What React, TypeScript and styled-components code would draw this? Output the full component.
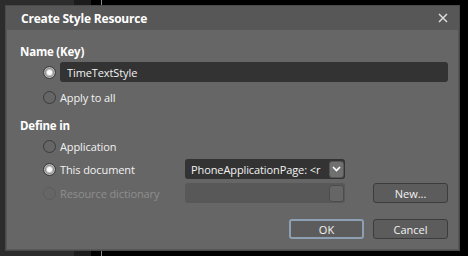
import React, { useState } from "react";
import styled, { createGlobalStyle } from "styled-components";

const GlobalStyle = createGlobalStyle`
  html, body {
    margin: 0;
    padding: 0;
  }
  body {
    width: 468px;
    height: 256px;
    overflow: hidden;
    background: linear-gradient(
      to right,
      #2c2c2c 0 74px,
      #1c1c1c 74px 91px,
      #000 91px 101px,
      #8a8a8a 101px 102px,
      #000 102px
    );
    font-family: "Open Sans", "Noto Sans", "Liberation Sans", sans-serif;
  }
`;

const Screen = styled.div`
  padding: 5px 0 0 5px;
`;

const Dialog = styled.div`
  width: 455px;
  height: 246px;
  box-sizing: border-box;
  background: #575757;
  border: 1px solid #4a4a4a;
  padding: 0 1px 1px 1px;
  display: flex;
  flex-direction: column;
`;

const TitleBar = styled.div`
  height: 24px;
  display: flex;
  align-items: center;
  justify-content: space-between;
  padding: 0 8px 0 14px;
`;

const Title = styled.div`
  color: #ffffff;
  font-size: 12px;
  font-weight: 700;
  letter-spacing: -0.2px;
`;

const CloseButton = styled.button`
  width: 14px;
  height: 14px;
  padding: 0;
  border: none;
  background: transparent;
  display: flex;
  align-items: center;
  justify-content: center;
`;

const Panel = styled.div`
  flex: 1;
  background: #666666;
  padding: 14px 10px 0 13px;
  display: flex;
  flex-direction: column;
`;

const GroupLabel = styled.div<{ $top?: number }>`
  color: #ffffff;
  font-size: 11.5px;
  font-weight: 700;
  letter-spacing: -0.2px;
  line-height: 16px;
  margin-top: ${(p) => p.$top ?? 0}px;
`;

const Row = styled.div<{ $top?: number }>`
  display: flex;
  align-items: center;
  height: 20px;
  margin-top: ${(p) => p.$top ?? 0}px;
  padding-left: 23px;
`;

const RadioCircle = styled.span<{ $checked?: boolean; $disabled?: boolean }>`
  width: 11px;
  height: 11px;
  border-radius: 50%;
  flex: none;
  margin-right: 4px;
  display: flex;
  align-items: center;
  justify-content: center;
  border: 1px solid ${(p) => (p.$disabled ? "#5c5c5c" : "#3a3a3a")};
  background: ${(p) => (p.$checked ? "#8a8a8a" : "transparent")};
  box-shadow: ${(p) => (p.$checked ? "inset 0 0 0 1px #b8b8b8" : "none")};

  &::after {
    content: "";
    display: ${(p) => (p.$checked ? "block" : "none")};
    width: 5px;
    height: 5px;
    border-radius: 50%;
    background: #ffffff;
    box-shadow: 0 0 1px 1px rgba(255, 255, 255, 0.6);
  }
`;

const RadioLabel = styled.label<{ $disabled?: boolean; $width?: number }>`
  display: flex;
  align-items: center;
  font-size: 11px;
  letter-spacing: -0.1px;
  color: ${(p) => (p.$disabled ? "#8e8e8e" : "#f2f2f2")};
  width: ${(p) => (p.$width ? `${p.$width}px` : "auto")};
  flex: none;
  cursor: default;
`;

const TextBox = styled.input`
  flex: 1;
  height: 20px;
  box-sizing: border-box;
  border: none;
  border-radius: 3px;
  background: #333333;
  color: #f2f2f2;
  font-family: inherit;
  font-size: 11px;
  letter-spacing: -0.1px;
  padding: 0 7px;
  outline: none;
`;

const Combo = styled.div<{ $disabled?: boolean }>`
  width: 160px;
  height: 20px;
  box-sizing: border-box;
  border-radius: 3px;
  background: ${(p) => (p.$disabled ? "#585858" : "#333333")};
  display: flex;
  align-items: center;
  padding: 0 1px 0 6px;
  overflow: hidden;
`;

const ComboText = styled.span`
  flex: 1;
  font-size: 11px;
  letter-spacing: -0.1px;
  color: #f2f2f2;
  white-space: nowrap;
  overflow: hidden;
`;

const ComboArrow = styled.span<{ $disabled?: boolean }>`
  width: 15px;
  height: 17px;
  flex: none;
  border-radius: 3px;
  box-sizing: border-box;
  background: ${(p) => (p.$disabled ? "#666666" : "#707070")};
  border: 1px solid ${(p) => (p.$disabled ? "#4c4c4c" : "#555555")};
  display: flex;
  align-items: center;
  justify-content: center;
`;

const Spacer = styled.div`
  flex: 1;
`;

const Button = styled.button<{ $focused?: boolean }>`
  width: 75px;
  height: 20px;
  box-sizing: border-box;
  border-radius: 3px;
  border: ${(p) => (p.$focused ? "2px solid #8d9fb3" : "1px solid #3c3c3c")};
  background: #5c5c5c;
  color: #f2f2f2;
  font-family: inherit;
  font-size: 11px;
  padding: 0;
  display: flex;
  align-items: center;
  justify-content: center;
`;

const ButtonRow = styled.div`
  display: flex;
  justify-content: flex-end;
  gap: 9px;
  margin-top: 16px;
`;

const Chevron = () => (
  <svg width="9" height="6" viewBox="0 0 9 6">
    <path d="M1 1 L4.5 4.5 L8 1" fill="none" stroke="#ffffff" strokeWidth="1.6" />
  </svg>
);

const CloseIcon = () => (
  <svg width="10" height="10" viewBox="0 0 10 10">
    <path d="M1 1 L9 9 M9 1 L1 9" stroke="#dcdcdc" strokeWidth="1.5" />
  </svg>
);

const App = () => {
  const [name, setName] = useState("TimeTextStyle");

  return (
    <>
      <GlobalStyle />
      <Screen>
        <Dialog>
          <TitleBar>
            <Title>Create Style Resource</Title>
            <CloseButton aria-label="Close">
              <CloseIcon />
            </CloseButton>
          </TitleBar>
          <Panel>
            <GroupLabel>Name (Key)</GroupLabel>
            <Row $top={2}>
              <RadioCircle $checked />
              <TextBox value={name} onChange={(e) => setName(e.target.value)} />
            </Row>
            <Row $top={5}>
              <RadioLabel>
                <RadioCircle />
                Apply to all
              </RadioLabel>
            </Row>

            <GroupLabel $top={11}>Define in</GroupLabel>
            <Row $top={2}>
              <RadioLabel>
                <RadioCircle />
                Application
              </RadioLabel>
            </Row>
            <Row $top={3}>
              <RadioLabel $width={142}>
                <RadioCircle $checked />
                This document
              </RadioLabel>
              <Combo>
                <ComboText>PhoneApplicationPage: &lt;r</ComboText>
                <ComboArrow>
                  <Chevron />
                </ComboArrow>
              </Combo>
            </Row>
            <Row $top={4}>
              <RadioLabel $width={142} $disabled>
                <RadioCircle $disabled />
                Resource dictionary
              </RadioLabel>
              <Combo $disabled>
                <Spacer />
                <ComboArrow $disabled />
              </Combo>
              <Spacer />
              <Button>New...</Button>
            </Row>

            <ButtonRow>
              <Button $focused>OK</Button>
              <Button>Cancel</Button>
            </ButtonRow>
          </Panel>
        </Dialog>
      </Screen>
    </>
  );
};

export default App;
